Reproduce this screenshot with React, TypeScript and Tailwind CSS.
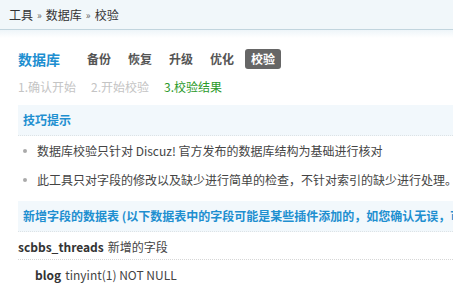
import React from "react";

const font = { fontFamily: '"Microsoft YaHei", "Noto Sans CJK SC", "Noto Sans", sans-serif' };

export default function App() {
  const navItems = ["备份", "恢复", "升级", "优化"];

  return (
    <div
      className="h-[299px] w-[453px] overflow-hidden bg-white text-[12px] text-[#333]"
      style={font}
    >
      {/* breadcrumb bar */}
      <div className="flex h-[30px] items-center border-b border-[#c2d5de] bg-[#f1f7fa] pl-[9px] text-[12px] text-[#333]">
        工具 <span className="mx-[4px] text-[10px] text-[#666]">»</span> 数据库{" "}
        <span className="mx-[4px] text-[10px] text-[#666]">»</span> 校验
      </div>
      <div className="h-[8px] bg-gradient-to-b from-[#eef5f9] to-white" />

      <div className="pl-[18px]">
        {/* nav */}
        <div className="mt-[11px] flex h-[20px] items-center whitespace-nowrap">
          <span className="mr-[27px] text-[14px] font-bold text-[#1e8fd0]">数据库</span>
          {navItems.map((n) => (
            <span key={n} className="mr-[17px] text-[12px] font-bold text-[#555]">
              {n}
            </span>
          ))}
          <span className="-ml-[6px] rounded-[3px] bg-[#666] px-[6px] py-[1px] text-[12px] font-bold text-white">
            校验
          </span>
        </div>

        {/* steps */}
        <div className="mt-[9px] flex gap-[15px] whitespace-nowrap text-[12px]">
          <span className="text-[#c4c4c4]">1.确认开始</span>
          <span className="text-[#c4c4c4]">2.开始校验</span>
          <span className="text-[#2a9a2a]">3.校验结果</span>
        </div>

        {/* tips */}
        <div className="mt-[9px] flex h-[31px] items-center border-b border-dotted border-[#dde3e6] bg-[#f2f8fc] pl-[5px] text-[12px] font-bold text-[#1e8fd0]">
          技巧提示
        </div>
        <ul className="whitespace-nowrap text-[12px] text-[#444]">
          <li className="flex h-[29px] items-center">
            <span className="ml-[5px] mr-[10px] h-[4px] w-[4px] shrink-0 rounded-full bg-[#aaa]" />
            数据库校验只针对 Discuz! 官方发布的数据库结构为基础进行核对
          </li>
          <li className="flex h-[29px] items-center">
            <span className="ml-[5px] mr-[10px] h-[4px] w-[4px] shrink-0 rounded-full bg-[#aaa]" />
            此工具只对字段的修改以及缺少进行简单的检查，不针对索引的缺少进行处理。
          </li>
        </ul>

        {/* new fields */}
        <div className="mt-[7px] flex h-[31px] items-center whitespace-nowrap border-b border-dotted border-[#dde3e6] bg-[#f2f8fc] pl-[5px] text-[12px] font-bold text-[#1e8fd0]">
          新增字段的数据表 (以下数据表中的字段可能是某些插件添加的，如您确认无误，可以不用理会)
        </div>
        <div className="flex h-[28px] items-center border-b border-dotted border-[#d6d6d6] pt-[2px] text-[12px] text-[#444]">
          <b className="mr-[4px] text-[#333]">scbbs_threads</b>新增的字段
        </div>
        <div className="flex h-[29px] items-center pl-[17px] text-[12px] text-[#444]">
          <b className="mr-[4px] text-[#333]">blog</b>tinyint(1) NOT NULL
        </div>
      </div>
    </div>
  );
}
